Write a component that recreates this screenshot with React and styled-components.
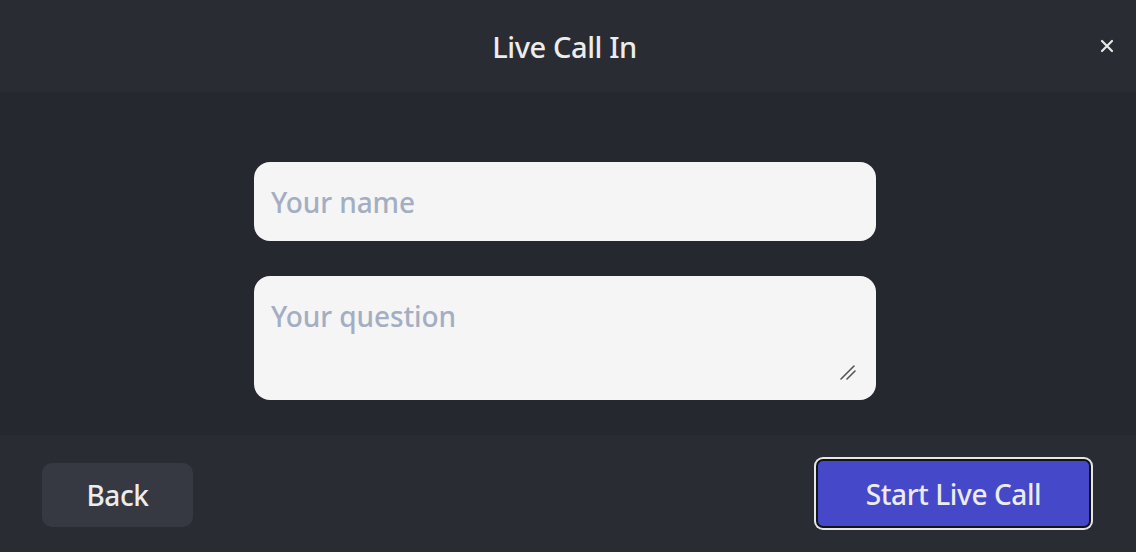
import styled, { createGlobalStyle } from "styled-components";

const Global = createGlobalStyle`
  html, body {
    margin: 0;
    padding: 0;
    background: #262830;
  }
  * { box-sizing: border-box; }
`

const Dialog = styled.div`
  width: 1136px;
  height: 552px;
  display: flex;
  flex-direction: column;
  background: #262830;
  font-family: "Noto Sans", "Open Sans", sans-serif;
  color: #ebebeb;
  overflow: hidden;
`

const Header = styled.div`
  height: 92px;
  display: flex;
  align-items: center;
  justify-content: center;
  position: relative;
  background: #2a2c34;
  padding-right: 7px;
`

const Title = styled.h1`
  margin: 0;
  font-size: 29px;
  font-weight: 500;
  letter-spacing: -0.4px;
  color: #ececec;
`

const Close = styled.button`
  position: absolute;
  right: 17px;
  top: 34px;
  width: 24px;
  height: 24px;
  padding: 0;
  border: none;
  background: none;
  cursor: pointer;
  display: flex;
  align-items: center;
  justify-content: center;
`

const Body = styled.div`
  flex: 1;
  display: flex;
  flex-direction: column;
  align-items: center;
  gap: 35px;
  padding-top: 70px;
  padding-right: 6px;
`

const fieldStyles = `
  width: 622px;
  border: none;
  outline: none;
  border-radius: 16px;
  background: #f5f5f5;
  font-family: "Noto Sans", "Open Sans", sans-serif;
  font-size: 28px;
  font-weight: 500;
  letter-spacing: -0.1px;
  color: #333;
  padding: 0 17px;
  &::placeholder {
    color: #a4aec2;
  }
`

const NameInput = styled.input`
  ${fieldStyles}
  height: 79px;
`

const QuestionBox = styled.div`
  position: relative;
  width: 622px;
  height: 124px;
`

const QuestionInput = styled.textarea`
  ${fieldStyles}
  display: block;
  height: 124px;
  padding-top: 24px;
  resize: none;
  line-height: 1.2;
`

const Grip = styled.svg`
  position: absolute;
  right: 19px;
  bottom: 20px;
  pointer-events: none;
`

const Footer = styled.div`
  height: 117px;
  display: flex;
  align-items: center;
  justify-content: space-between;
  padding: 0 47px 0 42px;
  background: #2a2c34;
`

const Button = styled.button`
  font-family: "Noto Sans", "Open Sans", sans-serif;
  font-size: 28px;
  font-weight: 500;
  letter-spacing: -0.4px;
  color: #ececec;
  cursor: pointer;
  display: flex;
  align-items: center;
  justify-content: center;
  border: none;
  background: ${(p) => (p.$primary ? "#4548c9" : "#363842")};
  width: ${(p) => (p.$primary ? "271px" : "151px")};
  height: ${(p) => (p.$primary ? "65px" : "64px")};
  border-radius: ${(p) => (p.$primary ? "5px" : "10px")};
  margin-top: 2px;
  ${(p) =>
    p.$primary &&
    `
    box-shadow: 0 0 0 2px #121317, 0 0 0 4px #e6e6e6;
    margin-top: 0;
  `}
`

export default function App() {
  return (
    <Dialog>
      <Global />
      <Header>
        <Title>Live Call In</Title>
        <Close aria-label="Close">
          <svg width="14" height="14" viewBox="0 0 14 14">
            <path d="M2 2 L12 12 M12 2 L2 12" stroke="#e8e8e8" strokeWidth="2.2" strokeLinecap="round" />
          </svg>
        </Close>
      </Header>
      <Body>
        <NameInput placeholder="Your name" />
        <QuestionBox>
          <QuestionInput placeholder="Your question" />
          <Grip width="18" height="16" viewBox="0 0 18 16">
            <path d="M2 15 L15 2 M8 15 L16 7" stroke="#555" strokeWidth="1.6" strokeLinecap="round" />
          </Grip>
        </QuestionBox>
      </Body>
      <Footer>
        <Button>Back</Button>
        <Button $primary>Start Live Call</Button>
      </Footer>
    </Dialog>
  );
}
